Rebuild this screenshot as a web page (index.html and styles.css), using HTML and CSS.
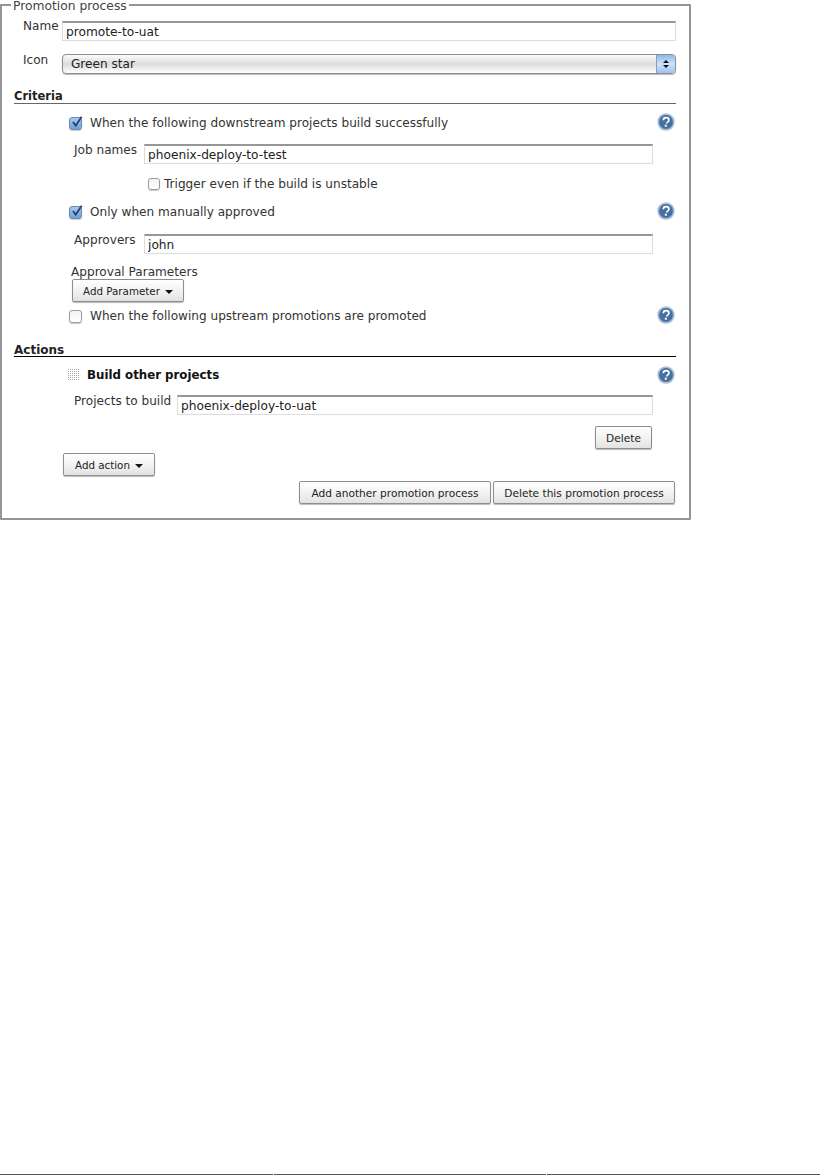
FILE: index.html
```html
<!DOCTYPE html>
<html lang="en">
<head>
  <meta charset="UTF-8">
  <title>Promotion process</title>
  <link rel="stylesheet" href="styles.css">
</head>
<body>
  <svg class="defs" width="0" height="0" aria-hidden="true">
    <symbol id="help" viewBox="0 0 18 18">
      <circle cx="9" cy="9" r="8.7" fill="#a9bdd9"/>
      <circle cx="9" cy="9" r="7" fill="#46709f"/>
      <path d="M6.300 7.200c0-1.700 1.200-2.600 2.800-2.600 1.700 0 2.800 1 2.800 2.300 0 1.100-.6 1.700-1.300 2.200-.6.4-.9.8-.9 1.500" fill="none" stroke="#fff" stroke-width="1.700"/>
      <rect x="7.800" y="11.700" width="2" height="2" fill="#fff"/>
    </symbol>
    <symbol id="tick" viewBox="0 0 14 14">
      <path d="M3.200 6.500l3 4L12.500 .8" fill="none" stroke="#23426e" stroke-width="2"/>
    </symbol>
  </svg>

  <form class="page">
    <fieldset class="process">
      <legend>Promotion process</legend>

      <div class="row row-name">
        <label class="lbl">Name</label>
        <input class="txt" type="text" value="promote-to-uat">
      </div>
      <div class="row row-icon">
        <label class="lbl">Icon</label>
        <div class="select">
          <span>Green star</span>
          <span class="select-arrows"><i class="up"></i><i class="down"></i></span>
        </div>
      </div>

      <h3 class="section">Criteria</h3>

      <div class="check-row first">
        <span class="cb on"><svg><use href="#tick"/></svg></span>
        <span>When the following downstream projects build successfully</span>
        <svg class="help"><use href="#help"/></svg>
      </div>
      <div class="row sub">
        <label class="lbl">Job names</label>
        <input class="txt" type="text" value="phoenix-deploy-to-test">
      </div>
      <div class="trigger">
        <span class="cb small"></span>
        <span>Trigger even if the build is unstable</span>
      </div>
      <div class="check-row approved">
        <span class="cb on"><svg><use href="#tick"/></svg></span>
        <span>Only when manually approved</span>
        <svg class="help"><use href="#help"/></svg>
      </div>
      <div class="row sub approvers">
        <label class="lbl">Approvers</label>
        <input class="txt" type="text" value="john">
      </div>
      <div class="params-title">Approval Parameters</div>
      <button type="button" class="btn menu add-param">Add Parameter</button>
      <div class="check-row upstream">
        <span class="cb"></span>
        <span>When the following upstream promotions are promoted</span>
        <svg class="help"><use href="#help"/></svg>
      </div>

      <h3 class="section actions">Actions</h3>

      <div class="action-head">
        <span class="grip"></span>
        <b>Build other projects</b>
        <svg class="help"><use href="#help"/></svg>
      </div>
      <div class="row sub build">
        <label class="lbl">Projects to build</label>
        <input class="txt" type="text" value="phoenix-deploy-to-uat">
      </div>
      <div class="delete-row">
        <button type="button" class="btn del">Delete</button>
      </div>
      <button type="button" class="btn menu add-action">Add action</button>
      <div class="bottom-btns">
        <button type="button" class="btn wide1">Add another promotion process</button>
        <button type="button" class="btn wide2">Delete this promotion process</button>
      </div>
    </fieldset>
  </form>

  <footer class="edge">
    <span></span><span></span><span></span>
  </footer>
</body>
</html>
```

FILE: styles.css
```css
html, body {
  margin: 0; padding: 0;
  height: 100%;
  background: #fff;
}
body {
  display: flex;
  flex-direction: column;
  font-family: 'DejaVu Sans', sans-serif;
  font-size: 12.1px;
  color: #333;
}
.defs { position: absolute; }

.page { width: 691px; }
.process {
  margin: -3px 0 0 0;
  padding: 0 13px 14px 12px;
  box-sizing: border-box;
  border: 2px solid #949494;
  border-radius: 1px;
  min-width: 0;
}
.process legend {
  margin-left: -3px;
  padding: 2px 2px 0;
  font-size: 12.3px;
  line-height: 14px;
  color: #444;
}

.row { display: flex; align-items: flex-start; }
.lbl { line-height: 14px; margin-top: -1px; color: #333; }
.txt {
  flex: 1;
  min-width: 0;
  height: 20px;
  box-sizing: border-box;
  padding: 1px 3px 0;
  border: 1px solid #dcdcdc;
  border-top: 2px solid #979797;
  background: #fff;
  font: 12.2px 'DejaVu Sans', sans-serif;
  color: #222;
  outline: none;
}
.row-name { margin: 8px 0 0 9px; }
.row-name .lbl { width: 39px; margin-top: -2px; }
.row-icon { margin-top: 13px; margin-left: 9px; }
.row-icon .lbl { width: 39px; }
.select {
  flex: 1;
  height: 20px;
  box-sizing: border-box;
  display: flex;
  align-items: center;
  justify-content: space-between;
  padding-left: 8px;
  border: 1px solid #8e8e8e;
  border-radius: 4px;
  background: linear-gradient(#fbfbfb, #dcdcdc 50%, #fff);
  box-shadow: 0 1px 1px #bbb;
  color: #222;
}
.select-arrows {
  width: 18px;
  align-self: stretch;
  display: flex;
  flex-direction: column;
  align-items: center;
  justify-content: center;
  gap: 2px;
  background: linear-gradient(#8fb8ec, #cfe2f7 50%, #9cc2ee);
  border-left: 1px solid #7f9fcc;
  border-radius: 0 3px 3px 0;
}
.select-arrows i { width: 0; height: 0; border: 3px solid transparent; }
.select-arrows .up { border-top: 0; border-bottom: 3px solid #111; }
.select-arrows .down { border-bottom: 0; border-top: 3px solid #111; }

.section {
  margin: 14px 0 0 0;
  height: 15px;
  line-height: 16px;
  font-size: 11.500px;
  font-weight: bold;
  color: #222;
  border-bottom: 1px solid #666;
}
.section.actions { margin-top: 17px; height: 14px; line-height: 17px; font-size: 12px; border-bottom-color: #000; }

.check-row, .action-head {
  display: flex;
  align-items: center;
  height: 18px;
  padding-left: 55px;
}
.check-row .cb { margin-right: 8px; }
.help { width: 18px; height: 18px; flex: none; margin: -2px 1px 0 auto; }

.first { margin-top: 10px; }
.sub { padding-left: 60px; padding-right: 23px; }
.sub .lbl { width: 70px; flex: none; }
.sub.build .lbl { width: 103px; }
.first + .sub { margin-top: 12px; }
.trigger {
  display: flex;
  align-items: center;
  gap: 4px;
  height: 14px;
  margin: 13px 0 0 134px;
}
.approved { margin-top: 12px; }
.approvers { margin-top: 13px; }
.params-title { margin: 12px 0 0 57px; line-height: 13px; }
.add-param { display: block; margin: 0 0 0 58px; width: 112px; }
.upstream { margin-top: 5px; }
.action-head { padding-left: 53px; margin-top: 8px; }
.action-head b { color: #111; font-size: 11.800px; margin-top: 1px; }
.action-head .help { margin-top: 2px; }
.grip {
  width: 12px;
  height: 12px;
  margin-right: 8px;
  background-color: #aaa;
  background-image: linear-gradient(90deg, #fff 50%, transparent 50%), linear-gradient(#fff 50%, transparent 50%);
  background-size: 2px 2px;
}
.build { margin-top: 12px; }
.delete-row { display: flex; justify-content: flex-end; padding-right: 24px; margin-top: 11px; }
.add-action { display: block; margin: 4px 0 0 49px; width: 92px; }
.bottom-btns { display: flex; justify-content: flex-end; gap: 2px; margin-top: 5px; padding-right: 1px; }

.cb {
  display: block;
  position: relative;
  flex: none;
  width: 13px;
  height: 13px;
  box-sizing: border-box;
  border: 1px solid #9a9a9a;
  border-radius: 3px;
  background: linear-gradient(#f3f3f3, #fff);
  box-shadow: 0 1px 1px #ccc;
}
.cb.small { width: 12px; height: 12px; }
.cb.on { background: linear-gradient(#a9c8ec, #6ea0dc); border-color: #6a88b0; }
.cb svg { position: absolute; left: 0; top: -2px; width: 13px; height: 13px; }

.btn {
  height: 23px;
  box-sizing: border-box;
  padding: 0;
  border: 1px solid #8d8d8d;
  border-radius: 2px;
  background: linear-gradient(#fff, #f1f1f1 55%, #e2e2e2);
  box-shadow: 0 1px 1px #bbb;
  font: 10.600px 'DejaVu Sans', sans-serif;
  color: #222;
}
.btn.menu { font-size: 10.300px; }
.btn.menu::after {
  content: "";
  display: inline-block;
  margin-left: 5px;
  vertical-align: 1px;
  border: 4px solid transparent;
  border-top: 4px solid #111;
  border-bottom: 0;
}
.del { width: 57px; }
.wide1 { width: 192px; }
.wide2 { width: 182px; }

.edge {
  margin-top: auto;
  display: flex;
  gap: 1px;
}
.edge span { flex: 1; height: 1px; background: #555; }
```
